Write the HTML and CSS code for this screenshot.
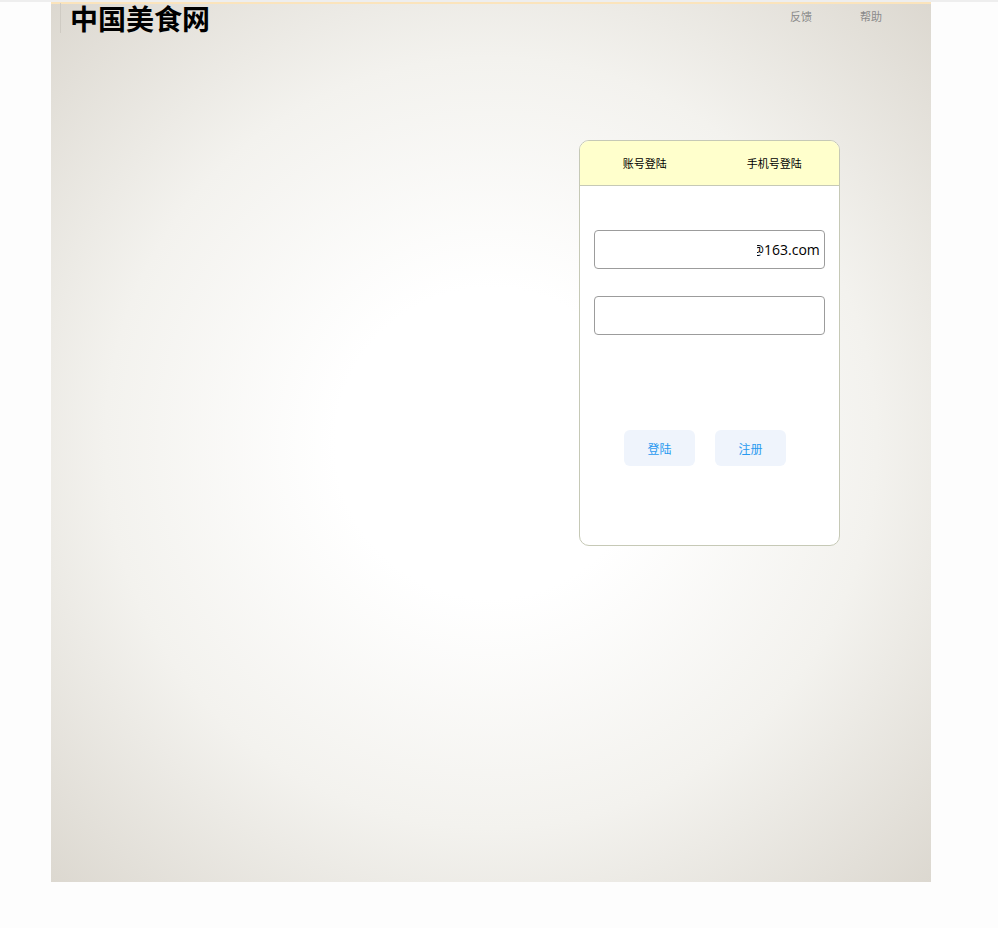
FILE: index.html
```html
<!DOCTYPE html>
<html lang="zh-CN">

<head>
    <meta charset="UTF-8">
    <meta name="viewport" content="width=device-width, initial-scale=1.0">
    <title>中国美食网</title>
    <link rel="stylesheet" href="styles.css">
</head>

<body>
    <div class="topline"></div>
    <div class="wrapper">
        <div class="header">
            <div class="logo">中国美食网</div>
            <div class="nav">
                <a href="#">反馈</a>
                <a href="#">帮助</a>
            </div>
        </div>

        <div class="login">
            <div class="tabs">
                <div class="tab">账号登陆</div>
                <div class="tab">手机号登陆</div>
            </div>
            <form class="loginForm">
                <input type="text" id="username" class="field user" value="admin2020@163.com">
                <input type="password" class="field">
                <div class="buttons">
                    <button type="button" class="btn">登陆</button>
                    <button type="button" class="btn">注册</button>
                </div>
            </form>
        </div>
    </div>

    <script>
        const username = document.getElementById('username');
        username.scrollLeft = username.scrollWidth;
    </script>
</body>

</html>
```

FILE: styles.css
```css
body {
    margin: 0;
    padding: 0;
    font-family: "Noto Sans CJK SC", sans-serif;
    background-color: #fdfdfd;
}

.topline {
    height: 2px;
    background-color: #eeeeee;
}

.wrapper {
    width: 880px;
    height: 878px;
    margin-left: 51px;
    border-top: 2px solid #fbe4bc;
    background: radial-gradient(ellipse at 50% 50%, #ffffff 25%, #f3f2ee 62%, #dcd8d0 100%);
}

.header {
    display: flex;
    justify-content: space-between;
    align-items: flex-start;
}

.logo {
    margin-left: 9px;
    padding-left: 9px;
    border-left: 1px solid #cfcbc3;
    font-size: 28px;
    font-weight: bold;
    line-height: 30px;
    margin-top: -1px;
    color: #000;
    white-space: nowrap;
}

.nav {
    display: flex;
    padding-right: 25px;
}

.nav a {
    width: 70px;
    text-align: center;
    font-size: 11px;
    line-height: 24px;
    color: #8a8a8a;
    text-decoration: none;
}

.login {
    width: 259px;
    height: 404px;
    margin: 107px 0 0 528px;
    border: 1px solid #c6c9b6;
    border-radius: 10px;
    background-color: #fff;
    overflow: hidden;
}

.tabs {
    display: flex;
    height: 44px;
    background-color: #ffffcc;
    border-bottom: 1px solid #c6c9b6;
}

.tab {
    flex: 1;
    text-align: center;
    font-size: 11px;
    line-height: 44px;
    color: #000;
}

.loginForm {
    display: flex;
    flex-direction: column;
    padding: 44px 0 0 14px;
}

.field {
    box-sizing: border-box;
    width: 231px;
    height: 39px;
    margin-bottom: 27px;
    border: 1px solid #9c9c9c;
    border-radius: 4px;
    padding: 0 4px;
    font-family: "Open Sans", sans-serif;
    font-size: 14px;
    outline: none;
}

.field.user {
    padding-left: 162px;
}

.buttons {
    display: flex;
    gap: 20px;
    margin: 68px 0 0 30px;
}

.btn {
    width: 71px;
    height: 36px;
    border: none;
    border-radius: 6px;
    background-color: #eff4fc;
    color: #2a9af0;
    font-family: "Noto Sans CJK SC", sans-serif;
    font-size: 12px;
}
```
